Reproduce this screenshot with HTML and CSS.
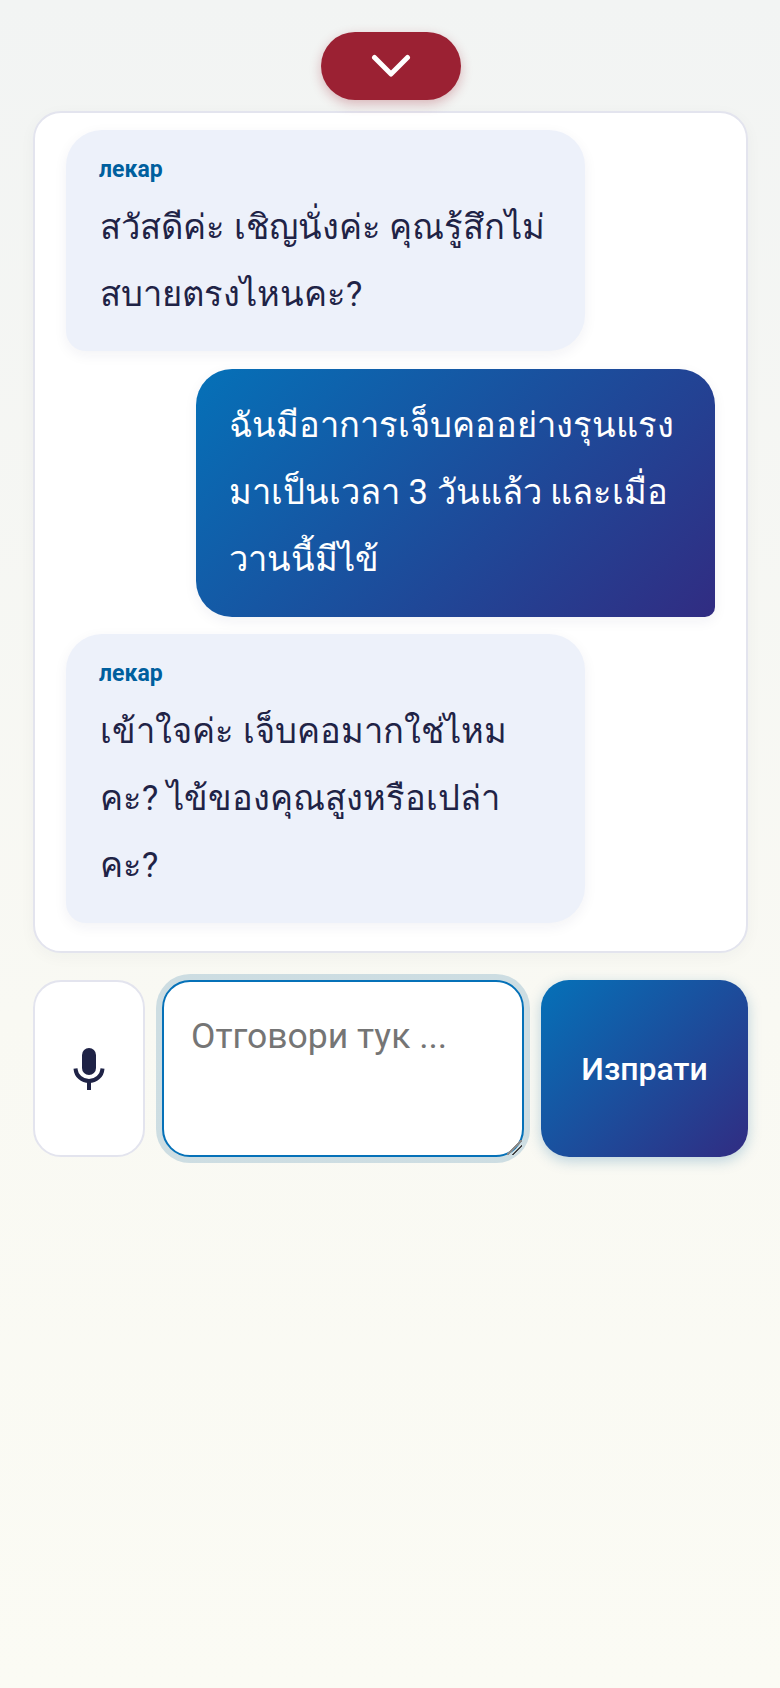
FILE: index.html
```html
<!DOCTYPE html>
<html lang="th">
<head>
<meta charset="utf-8">
<title>Чат</title>
<link rel="stylesheet" href="styles.css">
</head>
<body>
<main class="page">
  <div class="toggle-row">
    <button class="toggle" type="button" aria-label="Свий">
      <svg class="chevron" viewBox="0 0 40 24" width="40" height="24"><path d="M3.5 3.5 L20 20 L36.5 3.5" fill="none" stroke="#fff" stroke-width="5" stroke-linecap="round" stroke-linejoin="round"/></svg>
    </button>
  </div>
  <section class="chat">
    <div class="bubble doctor">
      <div class="who">лекар</div>
      <div class="text">สวัสดีค่ะ เชิญนั่งค่ะ คุณรู้สึกไม่สบายตรงไหนคะ?</div>
    </div>
    <div class="bubble patient">
      <div class="text">ฉันมีอาการเจ็บคออย่างรุนแรงมาเป็นเวลา 3 วันแล้ว และเมื่อวานนี้มีไข้</div>
    </div>
    <div class="bubble doctor">
      <div class="who">лекар</div>
      <div class="text">เข้าใจค่ะ เจ็บคอมากใช่ไหมคะ? ไข้ของคุณสูงหรือเปล่าคะ?</div>
    </div>
  </section>
  <form class="composer">
    <button class="mic" type="button" aria-label="Микрофон">
      <svg viewBox="0 0 32 42" width="32" height="42"><rect x="9" y="0" width="14" height="27" rx="7" fill="#1f2346"/><path d="M2.5 20.5 C3 28 9 33 16 33 C23 33 29 28 29.5 20.5" fill="none" stroke="#1f2346" stroke-width="4"/><rect x="14" y="32" width="4" height="10" fill="#1f2346"/></svg>
    </button>
    <textarea class="answer" placeholder="Отговори тук ..."></textarea>
    <button class="send" type="button">Изпрати</button>
  </form>
</main>
</body>
</html>
```

FILE: styles.css
```css
* { box-sizing: border-box; }
html, body { margin: 0; height: 100%; }
body {
  background: linear-gradient(180deg, #f2f4f3 0%, #f9f9f3 60%, #fbfbf4 100%);
  font-family: Roboto, "Liberation Sans", sans-serif;
  color: #1f2346;
}
.page { height: 1688px; padding: 32px 32px 0 33px; }
.toggle-row { display: flex; justify-content: center; margin-bottom: 11px; }
.toggle {
  width: 140px; height: 68px; border: 0; border-radius: 34px;
  background: #9b2133;
  box-shadow: 0 4px 12px rgba(155, 33, 51, 0.3);
  display: flex; align-items: center; justify-content: center;
  padding: 0;
}
.chevron { display: block; }
.chat {
  background: #fff;
  border: 2px solid #e3e4ee;
  border-radius: 28px;
  padding: 17px 31px 29px;
  height: 842px;
  display: flex; flex-direction: column; gap: 17.5px;
  box-shadow: 0 4px 16px rgba(30, 40, 80, 0.04);
}
.bubble {
  width: 519px;
  padding: 23px 33px;
  border-radius: 36px;
  font-size: 34.5px;
  line-height: 67.2px;
}
.doctor {
  background: #edf1fa;
  padding-left: 34px;
  border-bottom-left-radius: 20px;
  box-shadow: 0 4px 14px rgba(30, 40, 80, 0.06);
  align-self: flex-start;
}
.patient {
  align-self: flex-end;
  background: linear-gradient(135deg, #0571b8 0%, #312c82 100%);
  color: #fff;
  border-bottom-right-radius: 10px;
  box-shadow: 0 4px 14px rgba(30, 40, 80, 0.06);
}
.who {
  font-size: 23px; line-height: 26px; font-weight: 700;
  color: #005f9e;
  margin: 3.5px 0 11.5px -1px;
}
.composer { display: flex; gap: 17px; margin-top: 27px; height: 177px; }
.mic {
  width: 112px; flex: none;
  background: #fff;
  border: 2px solid #e3e4ee;
  border-radius: 28px;
  display: flex; align-items: center; justify-content: center;
  padding: 0;
}
.answer {
  width: 362px; flex: none;
  height: 177px;
  background: #fff;
  border: 2px solid #0571b8;
  border-radius: 28px;
  box-shadow: 0 0 0 6px rgba(5, 95, 150, 0.18);
  padding: 30px 27px;
  font: 35.5px/1.4 Roboto, sans-serif;
  color: #1f2346;
  outline: none;
}
.answer::placeholder { color: #757575; opacity: 1; }
.answer::-webkit-resizer {
  background: linear-gradient(135deg, transparent 0 46%, #8a8a8a 46% 54%, transparent 54% 66%, #444 66% 72%, transparent 72%);
}
.answer::-webkit-scrollbar-corner { background: transparent; }
.send {
  flex: 1;
  border: 0;
  border-radius: 28px;
  background: linear-gradient(135deg, #0571b8 0%, #312c82 100%);
  color: #fff;
  font: 500 32px Roboto, sans-serif;
  box-shadow: 0 4px 14px rgba(5, 95, 150, 0.25);
  padding: 0;
}
```
